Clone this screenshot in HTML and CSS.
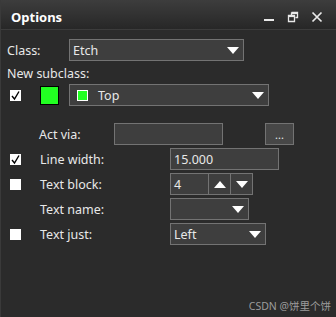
FILE: index.html
```html
<!DOCTYPE html>
<html>
<head>
<meta charset="utf-8">
<link rel="stylesheet" href="styles.css">
</head>
<body>
<div class="window">
  <div class="titlebar">
    <span class="title">Options</span>
    <div class="controls">
      <svg class="ctl" width="12" height="12" viewBox="0 0 12 12"><rect x="1" y="8" width="10" height="2" fill="#e8e8e8"/></svg>
      <svg class="ctl" width="12" height="12" viewBox="0 0 12 12"><path d="M4.5 1.5h6v5h-2M1.5 4.5h6v6h-6z M4.5 1.5v3" fill="none" stroke="#e8e8e8" stroke-width="1.3"/><rect x="1.5" y="4.5" width="6" height="1.6" fill="#e8e8e8"/><rect x="4.5" y="1.5" width="6" height="1.6" fill="#e8e8e8"/></svg>
      <svg class="ctl" width="12" height="12" viewBox="0 0 12 12"><path d="M1.5 1.5l9 9M10.5 1.5l-9 9" stroke="#e8e8e8" stroke-width="1.7"/></svg>
    </div>
  </div>
  <div class="content">
    <div class="row r-class">
      <span class="lbl w62">Class:</span>
      <div class="field select w174"><span class="val">Etch</span><span class="tri"></span></div>
    </div>
    <div class="row r-new"><span class="lbl">New subclass:</span></div>
    <div class="row r-sub">
      <span class="cb checked"><svg width="11" height="11" viewBox="0 0 11 11"><path d="M2 6l2.5 3L9 1.5" fill="none" stroke="#000" stroke-width="1.4"/></svg></span>
      <span class="swatch"></span>
      <div class="field select w199"><span class="mini"></span><span class="val top">Top</span><span class="tri"></span></div>
    </div>
    <div class="row r-act">
      <span class="lbl w75 ind">Act via:</span>
      <div class="field w108"></div>
      <div class="btn">...</div>
    </div>
    <div class="row r-opt first">
      <span class="cb checked"><svg width="11" height="11" viewBox="0 0 11 11"><path d="M2 6l2.5 3L9 1.5" fill="none" stroke="#000" stroke-width="1.4"/></svg></span>
      <span class="lbl w130">Line width:</span>
      <div class="field w108"><span class="val">15.000</span></div>
    </div>
    <div class="row r-opt">
      <span class="cb"></span>
      <span class="lbl w130">Text block:</span>
      <div class="spin">
        <div class="field spinval"><span class="val">4</span></div>
        <div class="sbtn"><span class="tri up"></span></div>
        <div class="sbtn"><span class="tri"></span></div>
      </div>
    </div>
    <div class="row r-opt">
      <span class="cb none"></span>
      <span class="lbl w130">Text name:</span>
      <div class="field select w78"><span class="val"></span><span class="tri"></span></div>
    </div>
    <div class="row r-opt">
      <span class="cb"></span>
      <span class="lbl w130">Text just:</span>
      <div class="field select w95"><span class="val">Left</span><span class="tri"></span></div>
    </div>
  </div>
  <div class="watermark">CSDN @饼里个饼</div>
</div>
</body>
</html>
```
FILE: styles.css
```css
html, body {
  margin: 0;
  padding: 0;
}
body {
  width: 336px;
  height: 317px;
  overflow: hidden;
  background: #2b2b2b;
  font-family: "Noto Sans", "Open Sans", sans-serif;
  font-size: 12.5px;
  color: #e8e8e8;
}
.window {
  position: relative;
  width: 336px;
  height: 317px;
  box-sizing: border-box;
  border-left: 1px solid #3a3a3a;
  background: #2b2b2b;
}
.titlebar {
  height: 30px;
  box-sizing: border-box;
  border-bottom: 1px solid #3c3c3c;
  background: linear-gradient(#3d3d3d, #272727);
  display: flex;
  align-items: center;
  justify-content: space-between;
  padding-left: 10px;
  padding-right: 13px;
}
.title {
  font-weight: 700;
  font-size: 13px;
  color: #ffffff;
  margin-top: 5px;
}
.controls {
  display: flex;
  gap: 12px;
  margin-top: 5px;
}
.content {
  padding: 9px 0 0 6px;
}
.row {
  display: flex;
  align-items: center;
  height: 22px;
}
.r-new {
  height: 23px;
  padding-top: 2px;
  box-sizing: border-box;
}
.r-act { margin-top: 17px; }
.r-opt { margin-top: 3px; }
.lbl { white-space: nowrap; }
.w62 { width: 62px; }
.w75 { width: 75px; }
.w130 { width: 130px; }
.ind { margin-left: 32px; }
.field {
  box-sizing: border-box;
  height: 22px;
  border: 1px solid #737373;
  background: #3e3e3e;
  display: flex;
  align-items: center;
  padding-left: 3px;
}
.w174 { width: 175px; }
.w199 { width: 200px; }
.w108 { width: 109px; }
.w78 { width: 79px; }
.w95 { width: 96px; }
.select .val { flex: 1; }
.tri {
  width: 0;
  height: 0;
  border-left: 6px solid transparent;
  border-right: 6px solid transparent;
  border-top: 7px solid #ffffff;
  margin-right: 4px;
}
.tri.up {
  border-top: 0;
  border-bottom: 7px solid #ffffff;
  margin-right: 0;
}
.cb {
  width: 11px;
  height: 11px;
  background: #ffffff;
  margin-left: 3px;
  margin-right: 19px;
  display: flex;
}
.cb.none { background: transparent; }
.swatch {
  box-sizing: border-box;
  width: 19px;
  height: 19px;
  background: #22ff22;
  border: 1px solid #000;
  margin-right: 10px;
}
.mini {
  box-sizing: border-box;
  width: 11px;
  height: 11px;
  background: #22ff22;
  border: 1px solid #ffffff;
  margin-left: 4px;
  margin-right: 10px;
}
.btn {
  box-sizing: border-box;
  width: 29px;
  height: 22px;
  margin-left: 42px;
  border: 1px solid #737373;
  background: #474747;
  display: flex;
  align-items: flex-end;
  justify-content: center;
  font-size: 11px;
  padding-bottom: 2px;
}
.spin {
  display: flex;
  height: 22px;
}
.spinval { width: 39px; }
.sbtn {
  box-sizing: border-box;
  width: 22px;
  height: 22px;
  border: 1px solid #737373;
  border-left: 0;
  background: #3e3e3e;
  display: flex;
  align-items: center;
  justify-content: center;
}
.sbtn .tri { margin-right: 0; }
.watermark {
  position: absolute;
  right: 5px;
  bottom: 4px;
  font-family: "Noto Sans", "Noto Sans CJK SC", sans-serif;
  font-size: 10.5px;
  color: #9c9c9c;
}
```
